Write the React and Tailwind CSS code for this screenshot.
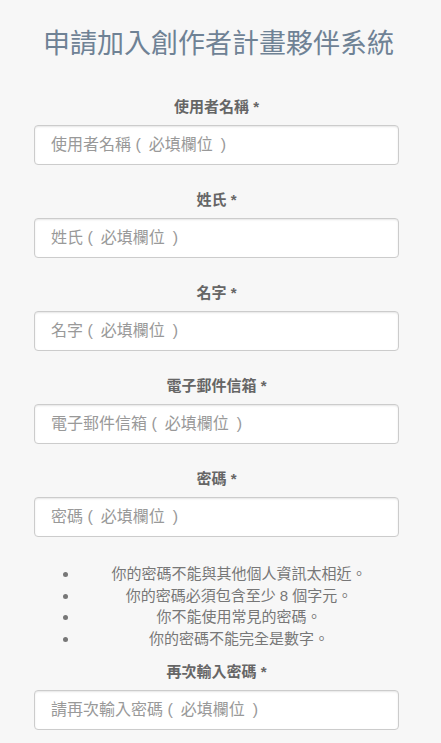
const FIELDS = [
  { label: '使用者名稱', placeholder: '使用者名稱 (\u2002必填欄位\u2002)' },
  { label: '姓氏', placeholder: '姓氏 (\u2002必填欄位\u2002)' },
  { label: '名字', placeholder: '名字 (\u2002必填欄位\u2002)' },
  { label: '電子郵件信箱', placeholder: '電子郵件信箱 (\u2002必填欄位\u2002)' },
  { label: '密碼', placeholder: '密碼 (\u2002必填欄位\u2002)', type: 'password' },
]

const RULES = [
  '你的密碼不能與其他個人資訊太相近。',
  '你的密碼必須包含至少 8 個字元。',
  '你不能使用常見的密碼。',
  '你的密碼不能完全是數字。',
]

const font = { fontFamily: '"Liberation Sans", "Noto Sans CJK TC", sans-serif' }

function Field({ label, placeholder, type = 'text' }) {
  return (
    <div className="flex flex-col items-center">
      <label className="text-[15px] leading-[20px] font-bold text-[#666] mb-2">
        {label} *
      </label>
      <input
        type={type}
        placeholder={placeholder}
        className="w-full h-10 px-4 text-[16px] bg-white border border-[#ccc] rounded-[4px] shadow-[inset_0_1px_2px_rgba(0,0,0,0.1)] placeholder:text-[#999] outline-none"
      />
    </div>
  )
}

export default function App() {
  return (
    <div className="min-h-[743px] bg-[#f7f7f7] pl-[34px] pr-[42px] pt-[26px]" style={font}>
      <h1 className="text-center text-[27px] leading-[36px] text-[#6f8295] mb-[35px] pl-1">
        申請加入創作者計畫夥伴系統
      </h1>

      <div className="flex flex-col gap-[25px]">
        {FIELDS.map((f) => (
          <Field key={f.label} {...f} />
        ))}
      </div>

      <ul className="list-disc pl-[45px] mt-[26px] mb-[13px] text-center text-[15px] leading-[21.5px] text-[#777] marker:text-[#777]">
        {RULES.map((r) => (
          <li key={r}>{r}</li>
        ))}
      </ul>

      <Field label="再次輸入密碼" placeholder={'請再次輸入密碼 (\u2002必填欄位\u2002)'} type="password" />
    </div>
  )
}
